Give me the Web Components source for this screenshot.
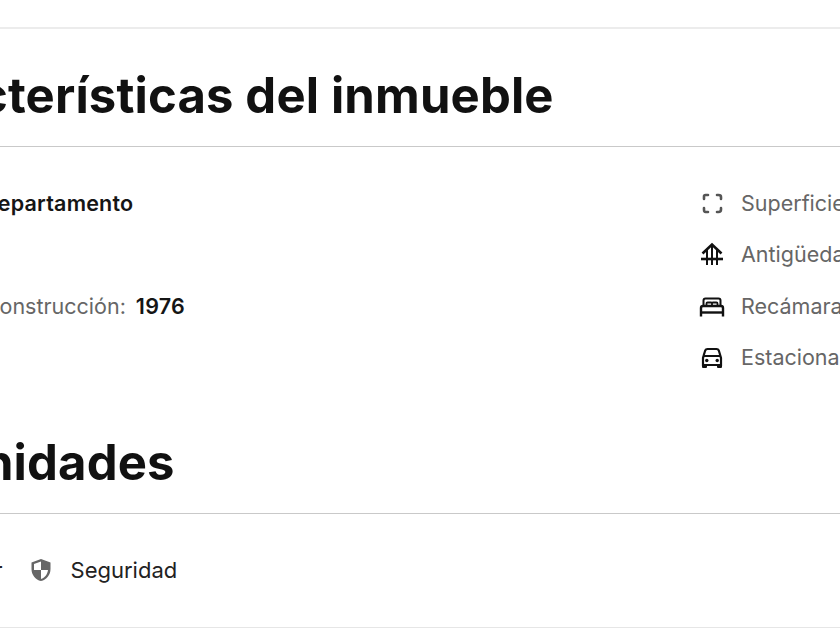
<!DOCTYPE html>
<html lang="es">
<head>
<meta charset="utf-8">
<title>Características del inmueble</title>
<style>
html,body{margin:0;padding:0;background:#fff;overflow:hidden;height:630px;}
body{font-family:"Inter","Liberation Sans",sans-serif;color:#111;}
</style>
</head>
<body>
<template id="sectionTpl">
<style>
:host{display:block;}
h2{margin:0;font-size:49px;font-weight:700;line-height:56px;letter-spacing:.15px;color:#111;padding:0 0 0 var(--title-x,6px);white-space:nowrap;}
.rule{height:1px;background:#c9c9c9;margin-top:22px;}
</style>
<h2><slot name="title"></slot></h2>
<div class="rule"></div>
<slot></slot>
</template>

<template id="rowTpl">
<style>
:host{display:flex;align-items:center;height:51.5px;font-size:21.5px;color:#666;white-space:nowrap;}
.icon{display:flex;width:26px;height:26px;margin-right:16px;color:#1a1a1a;}
:host(:not([icon])) .icon{display:none;}
b{font-weight:600;color:#151515;margin-left:10px;letter-spacing:.2px;}
::slotted(svg){width:26px;height:26px;}
</style>
<span class="icon"><slot name="icon"></slot></span>
<span><slot></slot></span>
<b><slot name="value"></slot></b>
</template>

<page-frame>
  <info-section>
    <span slot="title">Características del inmueble</span>
    <info-grid>
      <div slot="left">
        <info-row>Clase:<span slot="value">Departamento</span></info-row>
        <info-row></info-row>
        <info-row>Año de construcción:<span slot="value">1976</span></info-row>
        <info-row></info-row>
      </div>
      <div slot="right">
        <info-row icon><svg slot="icon" viewBox="0 0 26 26" fill="none" stroke="#555" stroke-width="2.6" stroke-linecap="round"><path d="M5 9V6.500Q5 5 6.500 5H9M18 5h1.500Q22 5 22 7V9M22 18v1.500Q22 22 19.500 22H18M9 22H6.500Q5 22 5 19.500V18"/></svg>Superficie</info-row>
        <info-row icon><svg slot="icon" viewBox="0 0 26 26" fill="none" stroke="#111" stroke-width="2"><path stroke-width="2.600" d="M3.500 12.500 13 3.500l9.500 9"/><path d="M8 9v15M13 5v19M18 9v15"/><path stroke-width="2.600" d="M2 18h22"/></svg>Antigüedad</info-row>
        <info-row icon><svg slot="icon" viewBox="0 0 26 26" fill="none" stroke="#111" stroke-width="2"><path d="M4.500 13V7.500q0-2 2-2h13q2 0 2 2V13"/><path stroke-width="1.800" d="M7.500 13v-2.500q0-1 1-1h3.500q1 0 1 1V13M13 13v-2.500q0-1 1-1h3.500q1 0 1 1V13"/><path stroke-width="2.400" d="M2 23.500V15q0-2 2-2h18q2 0 2 2v8.500"/><path stroke-width="2.400" d="M2 19.500h22"/></svg>Recámaras</info-row>
        <info-row icon><svg slot="icon" viewBox="0 0 26 26" fill="none" stroke="#111" stroke-width="2.200"><path d="m4.500 12 1.700-5.500Q6.800 5 8.500 5h9q1.700 0 2.300 1.500l1.700 5.500"/><path d="M4 21v-7q0-2 2-2h14q2 0 2 2v7z"/><path fill="#111" stroke="none" d="M3 20h5v3q0 1-1 1H4q-1 0-1-1zM18 20h5v3q0 1-1 1h-3q-1 0-1-1z"/><circle cx="7.800" cy="16.500" r="1.700" fill="#111" stroke="none"/><circle cx="18.200" cy="16.500" r="1.700" fill="#111" stroke="none"/></svg>Estacionamientos</info-row>
      </div>
    </info-grid>
  </info-section>
  <info-section style="--title-x:12px">
    <span slot="title">Amenidades</span>
    <amenity-list>
      <amenity-item>Elevador</amenity-item>
      <amenity-item><svg slot="icon" viewBox="0 0 24 24"><path fill="#666" d="M12 1 2.500 4.500v6.500c0 5.800 4 10.800 9.500 12 5.500-1.200 9.500-6.200 9.500-12V4.500zm0 2.400V12H5V6zM12 12h7c-.5 4.200-3.300 8-7 9z"/></svg>Seguridad</amenity-item>
    </amenity-list>
  </info-section>
</page-frame>

<script>
function mount(el,id){
    el.attachShadow({mode:'open'});
    el.shadowRoot.appendChild(document.getElementById(id).content.cloneNode(true));
}

class PageFrame extends HTMLElement {
    constructor(){
        super();
        this.attachShadow({mode:'open'});
        this.shadowRoot.innerHTML=`
<style>
:host{display:block;width:840px;height:630px;overflow:hidden;}
.top{height:2px;background:#ececec;margin-top:27px;}
.inner{margin-left:-140px;padding-top:39px;display:flex;flex-direction:column;gap:52px;}
</style>
<div class="top"></div>
<div class="inner"><slot></slot></div>`;
    }
}

class InfoSection extends HTMLElement {
    constructor(){super();mount(this,'sectionTpl');}
}

class InfoRow extends HTMLElement {
    constructor(){super();mount(this,'rowTpl');}
}

class InfoGrid extends HTMLElement {
    constructor(){
        super();
        this.attachShadow({mode:'open'});
        this.shadowRoot.innerHTML=`
<style>
:host{display:grid;grid-template-columns:839px 1fr;padding-top:30px;}
.left{padding-left:49px;}
</style>
<div class="left"><slot name="left"></slot></div>
<div><slot name="right"></slot></div>`;
    }
}

class AmenityList extends HTMLElement {
    constructor(){
        super();
        this.attachShadow({mode:'open'});
        this.shadowRoot.innerHTML=`
<style>
:host{display:flex;gap:26px;height:114px;align-items:flex-start;padding-top:39px;padding-left:52px;border-bottom:1px solid #e6e6e6;font-size:22px;color:#222;box-sizing:border-box;}
</style>
<slot></slot>`;
    }
}

class AmenityItem extends HTMLElement {
    constructor(){
        super();
        this.attachShadow({mode:'open'});
        this.shadowRoot.innerHTML=`
<style>
:host{display:flex;align-items:center;gap:18px;height:34px;white-space:nowrap;}
::slotted(svg){width:24px;height:24px;}
</style>
<slot name="icon"></slot><span><slot></slot></span>`;
    }
}

customElements.define('page-frame',PageFrame);
customElements.define('info-section',InfoSection);
customElements.define('info-row',InfoRow);
customElements.define('info-grid',InfoGrid);
customElements.define('amenity-list',AmenityList);
customElements.define('amenity-item',AmenityItem);
</script>
</body>
</html>
